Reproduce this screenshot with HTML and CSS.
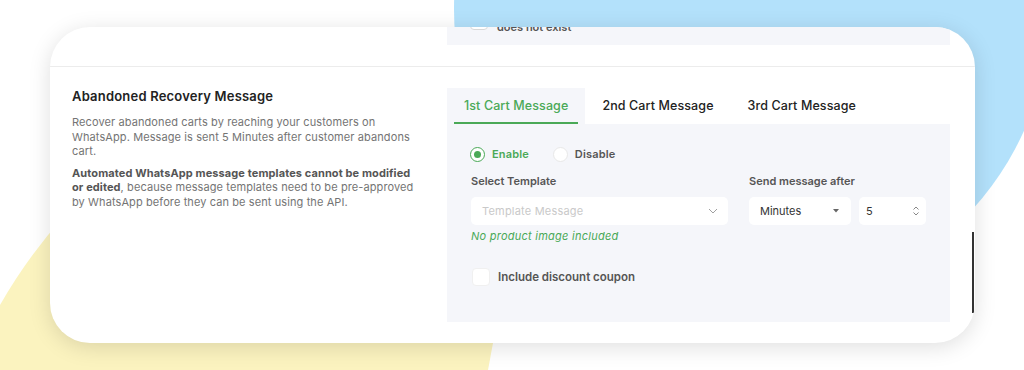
FILE: index.html
```html
<!DOCTYPE html>
<html lang="en">
<head>
    <meta charset="UTF-8">
    <meta name="viewport" content="width=device-width, initial-scale=1.0">
    <title>Abandoned Recovery Message</title>
    <link rel="stylesheet" href="styles.css">
</head>
<body>
    <svg class="backdrop" width="1024" height="370" viewBox="0 0 1024 370">
        <circle cx="752" cy="9" r="298" fill="#b3e1fb"/>
        <path d="M0 305 Q40 235 100 180 L400 180 Q490 260 493 343 L488 370 L0 370 Z" fill="#fbf3bf"/>
    </svg>

    <div class="card">
        <div class="card-top">
            <div class="prev-box">
                <div class="check-row">
                    <span class="checkbox"></span>
                    <span>does not exist</span>
                </div>
            </div>
        </div>

        <div class="section">
            <div class="intro">
                <h2>Abandoned Recovery Message</h2>
                <p>Recover abandoned carts by reaching your customers on WhatsApp. Message is sent 5 Minutes after customer abandons cart.</p>
                <p><strong>Automated WhatsApp message templates cannot be modified or edited</strong>, because message templates need to be pre-approved by WhatsApp before they can be sent using the API.</p>
            </div>

            <div class="cart-msgs">
                <div class="tabs">
                    <div class="tab active"><span>1st Cart Message</span></div>
                    <div class="tab"><span>2nd Cart Message</span></div>
                    <div class="tab"><span>3rd Cart Message</span></div>
                </div>
                <div class="tab-panel">
                    <div class="radios">
                        <label class="radio checked"><span class="dot"></span>Enable</label>
                        <label class="radio"><span class="dot"></span>Disable</label>
                    </div>
                    <div class="fields">
                        <div class="field">
                            <div class="field-label">Select Template</div>
                            <div class="select placeholder">
                                <span>Template Message</span>
                                <svg width="10" height="6" viewBox="0 0 10 6"><path d="M1 1 L5 5 L9 1" fill="none" stroke="#a0a0a0" stroke-width="1"/></svg>
                            </div>
                            <div class="note">No product image included</div>
                        </div>
                        <div class="field">
                            <div class="field-label">Send message after</div>
                            <div class="delay-inputs">
                                <div class="select unit">
                                    <span>Minutes</span>
                                    <svg width="6" height="4" viewBox="0 0 6 4"><path d="M0 0 L6 0 L3 3.5 Z" fill="#666"/></svg>
                                </div>
                                <div class="select number">
                                    <span>5</span>
                                    <svg width="8" height="12" viewBox="0 0 8 12"><path d="M1.5 4.5 L4 2 L6.5 4.5 M1.5 7.5 L4 10 L6.5 7.5" fill="none" stroke="#888" stroke-width="1"/></svg>
                                </div>
                            </div>
                        </div>
                    </div>
                    <div class="check-row coupon">
                        <span class="checkbox"></span>
                        <span>Include discount coupon</span>
                    </div>
                </div>
            </div>
        </div>
    </div>
</body>
</html>
```

FILE: styles.css
```css
:root {
    --green: #4aa957; --panel-bg: #f5f6fa; --text-dark: #222222;
    --text-gray: #747474; --text-label: #555555; --line: #ececec;
}
body { margin: 0; width: 1024px; height: 370px; overflow: hidden; position: relative; background: #ffffff; font-family: 'Inter', 'Open Sans', sans-serif; padding: 27px 49px 0 50px; box-sizing: border-box; }
.backdrop { position: absolute; top: 0; left: 0; z-index: 0; }
.card { position: relative; z-index: 1; width: 925px; height: 316px; background: #ffffff; border-radius: 40px; overflow: hidden; box-shadow: 0 4px 22px rgba(0, 0, 0, 0.13); }
.card::after { content: ""; position: absolute; right: 1px; top: 205px; width: 2px; height: 81px; background: #333333; }

.card-top { padding: 0 25px 0 397px; }
.prev-box { height: 18px; overflow: hidden; background: var(--panel-bg); display: flex; align-items: flex-end; padding: 0 23px 11px; box-sizing: border-box; }
.prev-box .check-row { align-items: flex-end; line-height: 14px; }
.prev-box .checkbox { border: 1px solid #d8d8d8; margin-bottom: 4px; }
.check-row { display: flex; align-items: center; gap: 9px; font-size: 11px; font-weight: 600; color: var(--text-label); }
.checkbox { width: 18px; height: 18px; background: #ffffff; border-radius: 4px; box-sizing: border-box; border: 1px solid #f0f0f0; }

.section { margin-top: 21px; border-top: 1px solid var(--line); padding: 20px 25px 0 22px; display: grid; grid-template-columns: 375px 503px; }
.intro h2 { margin: 0 0 10px; font-size: 13px; letter-spacing: 0.2px; font-weight: 600; color: var(--text-dark); line-height: 18px; }
.intro p { margin: 0 0 7px; width: 350px; font-size: 11px; letter-spacing: 0.1px; line-height: 14.5px; color: var(--text-gray); }
.intro strong { font-weight: 700; color: var(--text-label); }

.tabs { display: flex; height: 36px; margin-top: 1px; }
.tab { padding: 0 17px; display: flex; align-items: stretch; font-size: 12.5px; letter-spacing: 0.1px; font-weight: 500; color: var(--text-dark); }
.tab span { display: flex; align-items: center; padding: 0 10px; margin: 0 -10px; border-bottom: 2px solid transparent; }
.tab.active { background: var(--panel-bg); color: var(--green); }
.tab.active span { border-bottom-color: var(--green); }

.tab-panel { background: var(--panel-bg); height: 198px; padding: 22px 24px 0 23px; box-sizing: border-box; }
.radios { display: flex; gap: 24px; height: 16px; align-items: center; }
.radio { display: flex; align-items: center; gap: 7px; font-size: 11px; font-weight: 600; letter-spacing: 0.15px; color: var(--text-label); }
.radio .dot { width: 15px; height: 15px; border-radius: 50%; background: #ffffff; border: 1px solid #e8e8e8; box-sizing: border-box; display: flex; align-items: center; justify-content: center; }
.radio.checked { color: var(--green); }
.radio.checked .dot { border: 1.5px solid var(--green); }
.radio.checked .dot::after { content: ""; width: 7px; height: 7px; border-radius: 50%; background: var(--green); }

.fields { display: grid; grid-template-columns: 257px 177px; column-gap: 21px; margin-top: 11px; padding-left: 1px; }
.field-label { font-size: 11px; font-weight: 600; color: var(--text-label); line-height: 16px; margin-bottom: 8px; }
.select { height: 28px; background: #ffffff; border-radius: 5px; display: flex; align-items: center; justify-content: space-between; padding: 0 11px; box-sizing: border-box; font-size: 11px; color: #333333; }
.select.placeholder { color: #c9c9c9; padding-right: 10px; letter-spacing: 0.2px; }
.note { margin-top: 4px; font-size: 11px; letter-spacing: 0.25px; font-style: italic; color: var(--green); line-height: 14px; }
.delay-inputs { display: flex; gap: 8px; }
.unit { width: 102px; padding-right: 12px; }
.number { width: 67px; padding: 0 6px 0 7px; }

.coupon { margin-top: 25px; margin-left: 2px; gap: 8px; font-size: 11.5px; }
```
